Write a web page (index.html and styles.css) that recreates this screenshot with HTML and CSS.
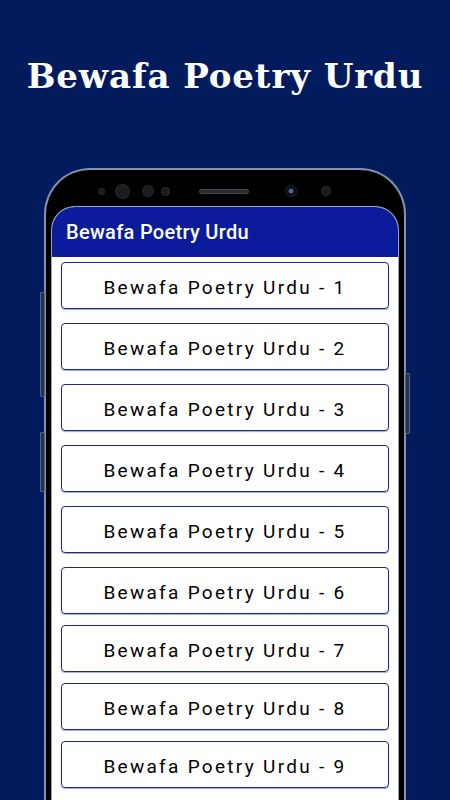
FILE: index.html
```html
<!DOCTYPE html>
<html lang="en">
<head>
    <meta charset="UTF-8">
    <meta name="viewport" content="width=device-width, initial-scale=1.0">
    <title>Bewafa Poetry Urdu</title>
    <link rel="stylesheet" href="styles.css">
</head>
<body>
    <div class="page">
        <h1 class="headline">Bewafa Poetry Urdu</h1>

        <div class="phone">
            <span class="side-btn left-top"></span>
            <span class="side-btn left-bottom"></span>
            <span class="side-btn right-mid"></span>

            <div class="bezel">
                <span class="dot sensor"></span>
                <span class="dot lens-big"></span>
                <span class="dot lens-mid"></span>
                <span class="dot lens-small"></span>
                <span class="speaker"></span>
                <span class="dot camera"></span>
                <span class="dot flash"></span>
            </div>

            <div class="screen">
                <div class="appbar">Bewafa Poetry Urdu</div>
                <div class="list">
                    <div class="item">Bewafa Poetry Urdu - 1</div>
                    <div class="item">Bewafa Poetry Urdu - 2</div>
                    <div class="item">Bewafa Poetry Urdu - 3</div>
                    <div class="item">Bewafa Poetry Urdu - 4</div>
                    <div class="item">Bewafa Poetry Urdu - 5</div>
                    <div class="item">Bewafa Poetry Urdu - 6</div>
                    <div class="item">Bewafa Poetry Urdu - 7</div>
                    <div class="item">Bewafa Poetry Urdu - 8</div>
                    <div class="item">Bewafa Poetry Urdu - 9</div>
                </div>
            </div>
        </div>
    </div>
</body>
</html>
```

FILE: styles.css
```css
:root {
    --navy: #011b5c;
    --appbar: #0a1c9c;
    --frame-edge: #8391ad;
    --item-border: #1b2789;
}

body {
    margin: 0;
    padding: 0;
    font-family: Roboto, "Liberation Sans", sans-serif;
}

.page {
    width: 450px;
    height: 800px;
    overflow: hidden;
    background-color: var(--navy);
    padding-top: 56px;
    box-sizing: border-box;
}

.headline {
    margin: 0;
    font-family: "DejaVu Serif", "Liberation Serif", serif;
    font-weight: bold;
    font-size: 34px;
    line-height: 40px;
    color: #fff;
    text-align: center;
    letter-spacing: 0.9px;
}

.phone {
    position: relative;
    width: 362px;
    margin: 72px auto 0;
    padding: 0 5px;
    box-sizing: border-box;
    background: #000;
    border: 2px solid var(--frame-edge);
    border-bottom: none;
    border-radius: 46px 46px 0 0;
    height: 640px;
}

.side-btn {
    position: absolute;
    width: 3px;
    background: #233355;
    border: 1px solid #56647f;
    border-radius: 1px;
}

.left-top {
    left: -6px;
    top: 122px;
    height: 103px;
}

.left-bottom {
    left: -6px;
    top: 262px;
    height: 58px;
}

.right-mid {
    right: -6px;
    top: 203px;
    height: 59px;
}

/* top bezel with sensors */
.bezel {
    height: 36px;
    box-sizing: border-box;
    padding: 6px 0 0 47px;
    display: flex;
    align-items: center;
}

.dot {
    border-radius: 50%;
    background: #1c1c1f;
    box-shadow: inset 0 0 2px #3a3a40;
}

.sensor {
    width: 7px;
    height: 7px;
}

.lens-big {
    width: 15px;
    height: 15px;
    margin-left: 10px;
}

.lens-mid {
    width: 12px;
    height: 12px;
    margin-left: 12px;
}

.lens-small {
    width: 9px;
    height: 9px;
    margin-left: 7px;
}

.speaker {
    width: 50px;
    height: 5px;
    margin-left: 29px;
    border-radius: 3px;
    background: #2a2b30;
    border: 1px solid #44464d;
    box-sizing: border-box;
}

.camera {
    width: 12px;
    height: 12px;
    margin-left: 36px;
    background: radial-gradient(circle, #55607a 0 2px, #0c0d12 3px);
}

.flash {
    width: 10px;
    height: 10px;
    margin-left: 24px;
}

.screen {
    background: #fff;
    border: 1px solid #9aa3b5;
    border-bottom: none;
    border-radius: 24px 24px 0 0;
    overflow: hidden;
    height: 600px;
}

.appbar {
    background: var(--appbar);
    height: 50px;
    padding-left: 14px;
    display: flex;
    align-items: center;
    color: #fff;
    font-size: 20px;
    font-weight: 500;
    letter-spacing: 0.3px;
}

.list {
    padding: 5px 9px;
    display: flex;
    flex-direction: column;
    gap: 14px;
}

.item {
    height: 47px;
    box-sizing: border-box;
    padding-top: 3px;
    border: 1px solid var(--item-border);
    border-radius: 4px;
    box-shadow: 0 1px 1px rgba(60, 70, 110, 0.45);
    display: flex;
    align-items: center;
    justify-content: center;
    font-size: 19px;
    letter-spacing: 2.3px;
    color: #000;
}

.item:nth-child(n+7) {
    margin-top: -3px;
}
```
